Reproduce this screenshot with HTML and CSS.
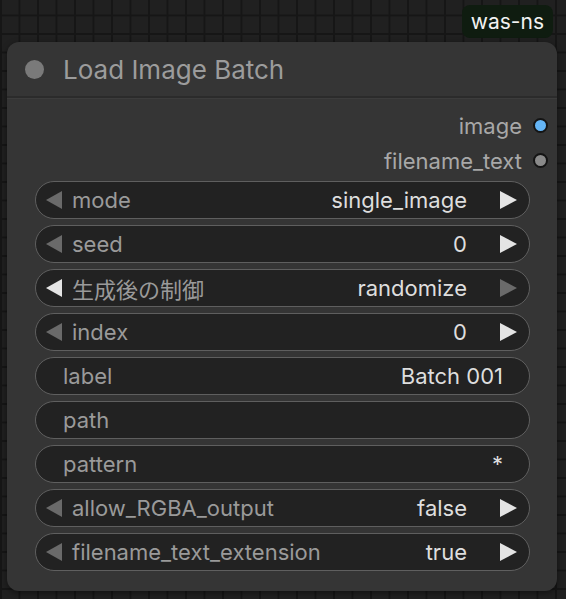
FILE: index.html
```html
<!DOCTYPE html>
<html lang="ja">
<head>
<meta charset="utf-8">
<title>Load Image Batch</title>
<link rel="stylesheet" href="styles.css">
</head>
<body>
<div class="canvas">
  <div class="badge-row">
    <span class="badge">was-ns</span>
  </div>
  <section class="node">
    <header class="node-title">
      <span class="title-dot"></span>
      <span class="title-text">Load Image Batch</span>
    </header>
    <div class="node-body">
      <div class="outputs">
        <div class="output"><span class="output-name">image</span><span class="slot slot-image"></span></div>
        <div class="output"><span class="output-name">filename_text</span><span class="slot slot-text"></span></div>
      </div>
      <div class="widgets">
        <div class="widget combo">
          <span class="arrow arrow-left"></span>
          <span class="w-label">mode</span>
          <span class="w-value">single_image</span>
          <span class="arrow arrow-right"></span>
        </div>
        <div class="widget combo">
          <span class="arrow arrow-left"></span>
          <span class="w-label">seed</span>
          <span class="w-value">0</span>
          <span class="arrow arrow-right"></span>
        </div>
        <div class="widget combo">
          <span class="arrow arrow-left lit"></span>
          <span class="w-label cjk">生成後の制御</span>
          <span class="w-value">randomize</span>
          <span class="arrow arrow-right dim"></span>
        </div>
        <div class="widget combo">
          <span class="arrow arrow-left"></span>
          <span class="w-label">index</span>
          <span class="w-value">0</span>
          <span class="arrow arrow-right"></span>
        </div>
        <div class="widget text">
          <span class="w-label">label</span>
          <span class="w-value">Batch 001</span>
        </div>
        <div class="widget text">
          <span class="w-label">path</span>
          <span class="w-value"></span>
        </div>
        <div class="widget text">
          <span class="w-label">pattern</span>
          <span class="w-value">*</span>
        </div>
        <div class="widget combo">
          <span class="arrow arrow-left"></span>
          <span class="w-label">allow_RGBA_output</span>
          <span class="w-value">false</span>
          <span class="arrow arrow-right"></span>
        </div>
        <div class="widget combo">
          <span class="arrow arrow-left"></span>
          <span class="w-label">filename_text_extension</span>
          <span class="w-value">true</span>
          <span class="arrow arrow-right"></span>
        </div>
      </div>
    </div>
  </section>
</div>
</body>
</html>
```

FILE: styles.css
```css
* {
  box-sizing: border-box;
}

html, body {
  margin: 0;
  padding: 0;
  width: 566px;
  height: 599px;
  overflow: hidden;
}

body {
  font-family: Inter, "Noto Sans CJK JP", sans-serif;
  background-color: #202020;
  background-image:
    linear-gradient(to right, #161616 0 1.5px, transparent 1.5px),
    linear-gradient(to bottom, #161616 0 1.5px, transparent 1.5px);
  background-size: 18.5px 18.5px;
  background-position: 0 -4px;
}

.canvas {
  display: flex;
  flex-direction: column;
  padding: 5px 9px 0 7px;
}

/* source badge above the node */
.badge-row {
  display: flex;
  justify-content: flex-end;
  padding-right: 4px;
}

.badge {
  height: 33px;
  padding: 0 9px 0 9px;
  display: flex;
  align-items: center;
  background: #0f1c10;
  color: #f2f2f2;
  font-size: 21px;
  border-radius: 8px;
}

/* node card */
.node {
  margin-top: 4px;
  width: 550px;
  height: 549px;
  background: #353535;
  border-radius: 12px;
  box-shadow: 0 2px 6px rgba(0, 0, 0, 0.45);
  display: flex;
  flex-direction: column;
}

.node-title {
  height: 56px;
  display: flex;
  align-items: center;
  padding-left: 18px;
  gap: 19px;
  border-bottom: 2px solid #2b2b2b;
  box-shadow: 0 1px 0 #3c3c3c;
}

.title-dot {
  width: 19px;
  height: 19px;
  border-radius: 50%;
  background: #7a7a7a;
}

.title-text {
  font-size: 26px;
  color: #9c9c9c;
}

.node-body {
  display: flex;
  flex-direction: column;
  padding-top: 10px;
}

.outputs {
  display: flex;
  flex-direction: column;
  align-items: flex-end;
  padding-right: 9px;
}

.output {
  height: 35px;
  display: flex;
  align-items: center;
  gap: 11px;
}

.output-name {
  font-size: 22px;
  color: #a8a8a8;
}

.slot {
  width: 15px;
  height: 15px;
  border-radius: 50%;
  border: 2px solid #141414;
}

.slot-image {
  background: #64b5f6;
}

.slot-text {
  background: #8a8a8a;
}

/* widget rows */
.widgets {
  display: flex;
  flex-direction: column;
  gap: 6px;
  margin-top: 3px;
  padding: 0 27px 0 28px;
}

.widget {
  height: 38px;
  border: 1.5px solid #5f5f5f;
  border-radius: 19px;
  background: #222222;
  display: flex;
  align-items: center;
  font-size: 22px;
}

.widget.combo {
  padding: 0 12px 0 10px;
}

.widget.text {
  padding: 0 26px 0 27px;
}

.w-label {
  color: #9a9a9a;
  flex: 1;
  white-space: nowrap;
}

.w-label.cjk {
  font-family: "Noto Sans CJK JP", sans-serif;
  font-size: 22px;
}

.w-value {
  color: #dedede;
  white-space: nowrap;
}

.combo .w-label {
  margin-left: 10px;
}

.combo .w-value {
  margin-right: 33px;
}

.arrow {
  width: 0;
  height: 0;
  border-top: 9px solid transparent;
  border-bottom: 9px solid transparent;
}

.arrow-left {
  border-right: 16px solid #6a6a6a;
}

.arrow-left.lit {
  border-right-color: #e4e4e4;
}

.arrow-right {
  border-left: 17px solid #e4e4e4;
}

.arrow-right.dim {
  border-left-color: #6a6a6a;
}
```
